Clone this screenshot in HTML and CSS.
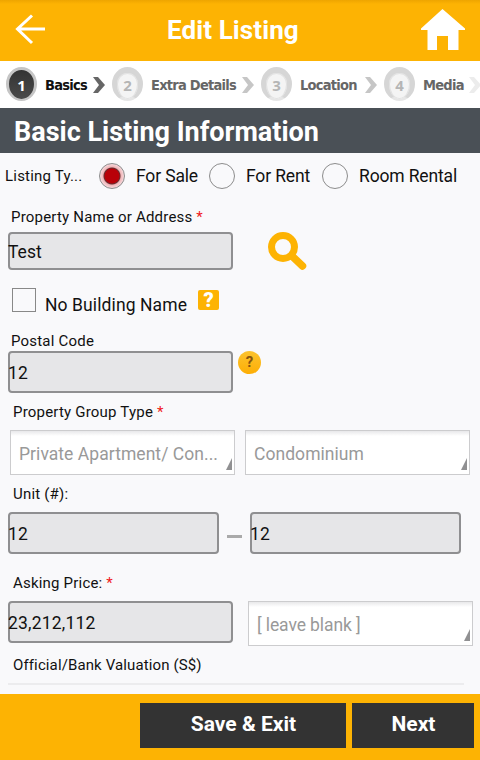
FILE: index.html
```html
<!DOCTYPE html>
<html lang="en">
<head>
  <meta charset="UTF-8" />
  <meta name="viewport" content="width=device-width, initial-scale=1.0" />
  <title>Edit Listing</title>
  <link rel="stylesheet" href="styles.css">
</head>
<body>
  <header class="topbar">
    <svg class="back" width="32" height="32" viewBox="0 0 32 32" fill="none" stroke="#fff" stroke-width="3">
      <path d="M18 1.500L3.500 15L18 29M3.500 15H31" />
    </svg>
    <h1>Edit Listing</h1>
    <svg class="home" width="46" height="42" viewBox="0 0 46 42" fill="#fff">
      <path d="M22.500 0L45 19.500V21H38.500V41H28V27H17V41H7.500V21H1V19.500Z" />
    </svg>
  </header>

  <nav class="steps">
    <div class="step active"><span class="num">1</span><span class="name s1">Basics</span></div>
    <svg class="chevron" width="13" height="18" viewBox="0 0 13 18" fill="#666"><path d="M0 1H5L12 9L5 17H0L6 9Z" /></svg>
    <div class="step"><span class="num">2</span><span class="name s2">Extra Details</span></div>
    <svg class="chevron" width="13" height="18" viewBox="0 0 13 18" fill="#c6c6c6"><path d="M0 1H5L12 9L5 17H0L6 9Z" /></svg>
    <div class="step"><span class="num">3</span><span class="name s3">Location</span></div>
    <svg class="chevron" width="13" height="18" viewBox="0 0 13 18" fill="#c6c6c6"><path d="M0 1H5L12 9L5 17H0L6 9Z" /></svg>
    <div class="step"><span class="num">4</span><span class="name s4">Media</span></div>
    <svg class="chevron" width="13" height="18" viewBox="0 0 13 18" fill="#ececec"><path d="M0 1H5L12 9L5 17H0L6 9Z" /></svg>
  </nav>

  <h2 class="title">Basic Listing Information</h2>

  <main class="form">
    <div class="types">
      <span class="types-label">Listing Ty...</span>
      <span class="radio checked"></span><span class="option sale">For Sale</span>
      <span class="radio"></span><span class="option rent">For Rent</span>
      <span class="radio"></span><span class="option room">Room Rental</span>
    </div>

    <div class="label name-label">Property Name or Address <b>*</b></div>
    <div class="row">
      <div class="input short">Test</div>
      <svg class="search" width="40" height="38" viewBox="0 0 40 38" fill="none" stroke="#fdb303">
        <circle cx="15" cy="15" r="11.500" stroke-width="7" />
        <path d="M24 24L34.500 34" stroke-width="7.500" stroke-linecap="round" />
      </svg>
    </div>

    <div class="check-row">
      <span class="checkbox"></span>
      <span class="check-text">No Building Name</span>
      <span class="help-square">?</span>
    </div>

    <div class="label postal-label">Postal Code</div>
    <div class="row">
      <div class="input">12</div>
      <span class="help-round">?</span>
    </div>

    <div class="label">Property Group Type <b>*</b></div>
    <div class="row selects">
      <div class="select">Private Apartment/ Con...</div>
      <div class="select">Condominium</div>
    </div>

    <div class="label">Unit (#):</div>
    <div class="row">
      <div class="input unit">12</div>
      <span class="dash"></span>
      <div class="input unit">12</div>
    </div>

    <div class="label price-label">Asking Price: <b>*</b></div>
    <div class="row price">
      <div class="input">23,212,112</div>
      <div class="select blank">[ leave blank ]</div>
    </div>

    <div class="label bank-label">Official/Bank Valuation (S$)</div>
    <div class="line"></div>
  </main>

  <footer class="bottombar">
    <button class="save">Save &amp; Exit</button>
    <button class="next">Next</button>
  </footer>
</body>
</html>
```
FILE: styles.css
```css
* {
  box-sizing: border-box;
  margin: 0;
  padding: 0;
}

body {
  width: 480px;
  height: 760px;
  display: flex;
  flex-direction: column;
  overflow: hidden;
  background: #f9f9fb;
  color: #111;
  font-family: Roboto, sans-serif;
  white-space: nowrap;
}

.topbar {
  height: 61px;
  flex-shrink: 0;
  display: flex;
  align-items: flex-start;
  padding: 0 14px;
  background: linear-gradient(#eea500, #fdb303 4px);
  color: #fff;
}

.back {
  margin-top: 14px;
}

.topbar h1 {
  margin-left: 121px;
  font-size: 26px;
  line-height: 60px;
  letter-spacing: 0.1px;
}

.home {
  margin: 9px 0 0 auto;
}

.steps {
  height: 47px;
  flex-shrink: 0;
  display: flex;
  align-items: center;
  padding: 0 0 2px 6px;
  background: #fff;
  overflow: hidden;
}

.step {
  display: flex;
  flex-shrink: 0;
  align-items: center;
}

.num {
  width: 31px;
  height: 34px;
  flex-shrink: 0;
  border: 5px solid #d6d6d6;
  border-top-width: 6px;
  border-bottom: 2px solid #e6e6e6;
  border-radius: 50%;
  background: #f4f4f4;
  box-shadow: inset 0 0 0 1px #e2e2e2;
  color: #b5b5b5;
  font: bold 15px/25px "Noto Sans", sans-serif;
  text-align: center;
}

.active .num {
  border: 3px solid #c5c5c5;
  border-bottom-width: 2px;
  background: linear-gradient(#333, #4a4a4a);
  box-shadow: none;
  color: #fff;
  line-height: 30px;
}

.name {
  margin-left: 8px;
  padding-top: 2px;
  color: #666;
  font: bold 14.5px/20px "DejaVu Sans Condensed", sans-serif;
  letter-spacing: -0.75px;
}

.active .name {
  color: #111;
}

.s1 { width: 48px; }
.s2 { width: 91px; }
.s3 { width: 65px; }
.s4 { width: 46px; }

.chevron {
  flex-shrink: 0;
  margin: 2px 6px 0 0;
}

.title {
  height: 45px;
  flex-shrink: 0;
  padding-left: 14px;
  background: #4a5056;
  color: #fff;
  font-size: 27px;
  line-height: 48px;
}

.form {
  flex: 1;
}

.types {
  height: 46px;
  display: flex;
  align-items: center;
  padding-left: 5px;
  font-size: 17.5px;
  letter-spacing: -0.15px;
}

.types-label {
  width: 94px;
  font-size: 15px;
  letter-spacing: 0.2px;
}

.radio {
  width: 26px;
  height: 26px;
  flex-shrink: 0;
  border: 1.5px solid #8c8c8c;
  border-radius: 50%;
}

.checked {
  background: radial-gradient(circle, #b80008 7px, #643033 8px, #f0b4b7 9px, #f6dadd 12px);
}

.option {
  margin-left: 11px;
}

.sale { width: 73px; }
.rent { width: 76px; }

.label {
  height: 20px;
  margin: 9px 0 8px 13px;
  font-size: 15px;
  line-height: 20px;
  letter-spacing: 0.2px;
}

.label b {
  color: #f01820;
  font-weight: normal;
}

.name-label {
  margin: 8px 0 5px 11px;
}

.postal-label {
  margin: 15px 0 0 11px;
}

.bank-label {
  letter-spacing: 0.12px;
}

.row {
  display: flex;
  align-items: flex-start;
  padding-left: 8px;
}

.input {
  width: 225px;
  height: 42px;
  border: 2px solid #8f8f91;
  border-radius: 4px;
  background: #e6e6e8;
  font-size: 17.5px;
  line-height: 40px;
  letter-spacing: 0.2px;
  text-indent: -2px;
}

.short {
  height: 38px;
  line-height: 36px;
  letter-spacing: 0;
}

.search {
  margin-left: 35px;
}

.check-row {
  height: 28px;
  display: flex;
  align-items: flex-start;
  margin-top: 18px;
  padding-left: 12px;
}

.checkbox {
  width: 24px;
  height: 24px;
  border: 1.5px solid #888;
}

.check-text {
  margin-left: 9px;
  width: 153px;
  font-size: 17.5px;
  line-height: 34px;
  letter-spacing: 0.1px;
}

.help-square {
  width: 21px;
  height: 20px;
  margin-top: 2px;
  border-radius: 2px;
  background: #fdb303;
  color: #fff;
  font-size: 20px;
  font-weight: 900;
  line-height: 20px;
  text-align: center;
}

.help-round {
  width: 23px;
  height: 23px;
  margin-left: 5px;
  border-radius: 50%;
  background: linear-gradient(#fcc32e, #fdae05);
  color: #865510;
  font-size: 15px;
  font-weight: bold;
  line-height: 23px;
  text-align: center;
}

.selects {
  gap: 10px;
  padding-left: 10px;
}

.select {
  position: relative;
  width: 225px;
  height: 45px;
  padding-left: 8px;
  border: 1px solid #ccccce;
  background: linear-gradient(#e8e8ea, #fff 5px);
  color: #999;
  font-size: 17.5px;
  line-height: 46px;
  letter-spacing: 0.05px;
}

/* corner marker of the dropdown */
.select::after {
  content: "";
  position: absolute;
  right: 2px;
  bottom: 4px;
  border-left: 6px solid transparent;
  border-bottom: 12px solid #909092;
}

.blank {
  margin-left: 15px;
  letter-spacing: -0.1px;
}

.unit {
  width: 211px;
}

.dash {
  width: 15px;
  height: 3px;
  margin: 23px 8px 0;
  background: #aaa;
}

.price-label {
  margin-top: 19px;
}

.line {
  width: 456px;
  height: 2px;
  margin-left: 8px;
  background: #ececee;
}

.bottombar {
  height: 66px;
  flex-shrink: 0;
  display: flex;
  justify-content: flex-end;
  gap: 6px;
  padding: 9px 6px 12px 0;
  background: #fdb303;
}

.bottombar button {
  border: none;
  background: #333;
  color: #fff;
  font: bold 21px/42px Roboto, sans-serif;
  padding: 0 0 3px 1px;
}

.save { width: 206px; }
.next { width: 122px; }
```
